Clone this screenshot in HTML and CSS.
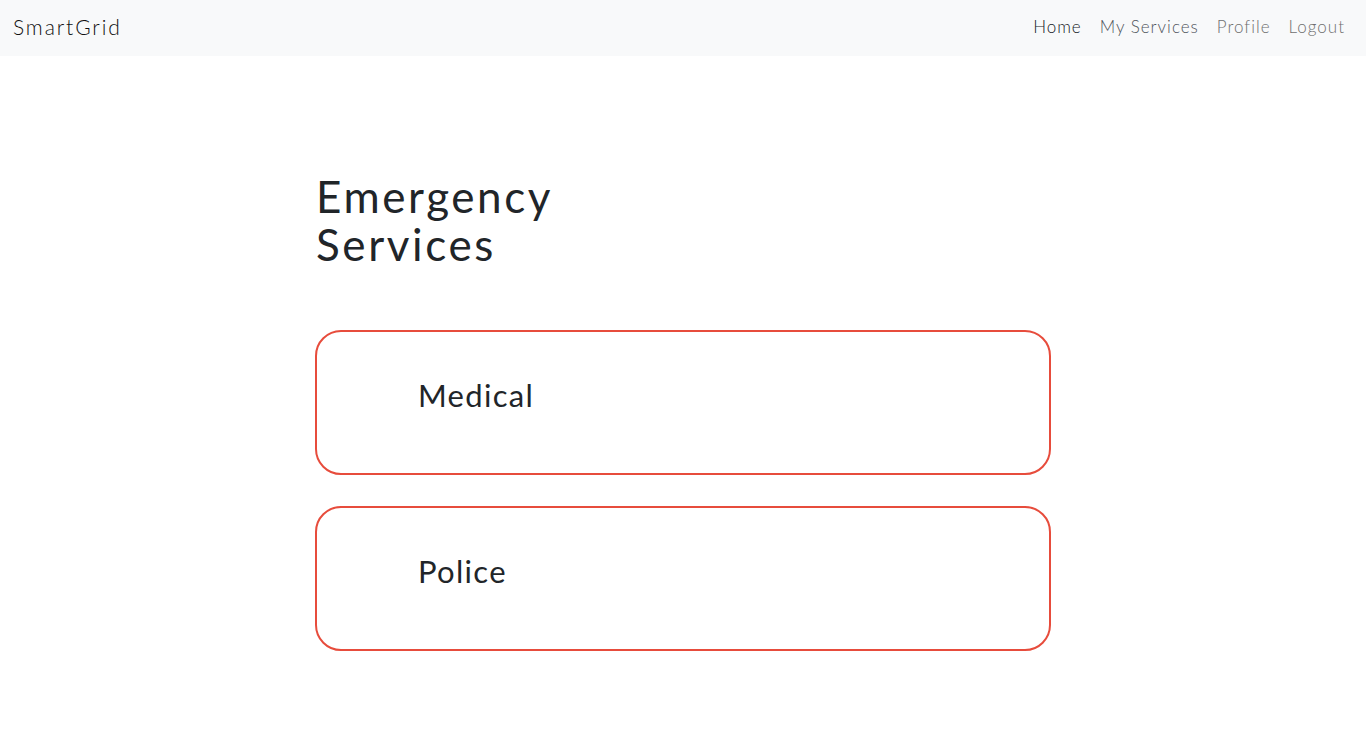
FILE: index.html
```html
<!DOCTYPE html>
<html>
<head>
<meta charset="utf-8">
<link rel="stylesheet" href="styles.css">
</head>
<body>
<nav class="navbar">
  <a class="brand" href="#">SmartGrid</a>
  <ul class="nav">
    <li><a class="nav-link active" href="#">Home</a></li>
    <li><a class="nav-link services" href="#">My Services</a></li>
    <li><a class="nav-link" href="#">Profile</a></li>
    <li><a class="nav-link" href="#">Logout</a></li>
  </ul>
</nav>
<main class="container">
  <h1 class="title">Emergency Services</h1>
  <div class="cards">
    <a class="card" href="#"><span class="card-label">Medical</span></a>
    <a class="card" href="#"><span class="card-label">Police</span></a>
  </div>
</main>
</body>
</html>
```
FILE: styles.css
```css
* { box-sizing: border-box; }
html, body { margin: 0; padding: 0; }
body {
  font-family: "Lato", "Noto Sans", sans-serif;
  color: #212529;
  background: #fff;
}
a { text-decoration: none; }
.navbar {
  height: 56px;
  background: #f8f9fa;
  display: flex;
  align-items: center;
  justify-content: space-between;
  padding: 0 21px 3px 13px;
}
.brand {
  font-size: 21px;
  font-weight: 300;
  color: #111;
  letter-spacing: 1.9px;
}
.nav {
  list-style: none;
  margin: 0;
  padding: 0;
  display: flex;
  gap: 18px;
}
.nav-link {
  font-size: 17px;
  font-weight: 300;
  color: #6f6f6f;
  letter-spacing: 1px;
}
.nav-link.active { color: #161a1f; }
.nav-link.services { color: #50555c; }
.container {
  width: 736px;
  margin: 0 auto;
  padding-top: 116px;
}
.title {
  margin: 0 0 62px 1px;
  width: 280px;
  font-weight: 400;
  font-size: 44px;
  line-height: 48px;
  color: #212529;
  letter-spacing: 2.6px;
}
.cards {
  display: flex;
  flex-direction: column;
  gap: 31px;
}
.card {
  display: block;
  height: 145px;
  border: 2px solid #e74c3c;
  border-radius: 26px;
  padding: 44px 0 0 101px;
  color: #212529;
}
.card-label {
  font-size: 31px;
  letter-spacing: 1.3px;
}
```
